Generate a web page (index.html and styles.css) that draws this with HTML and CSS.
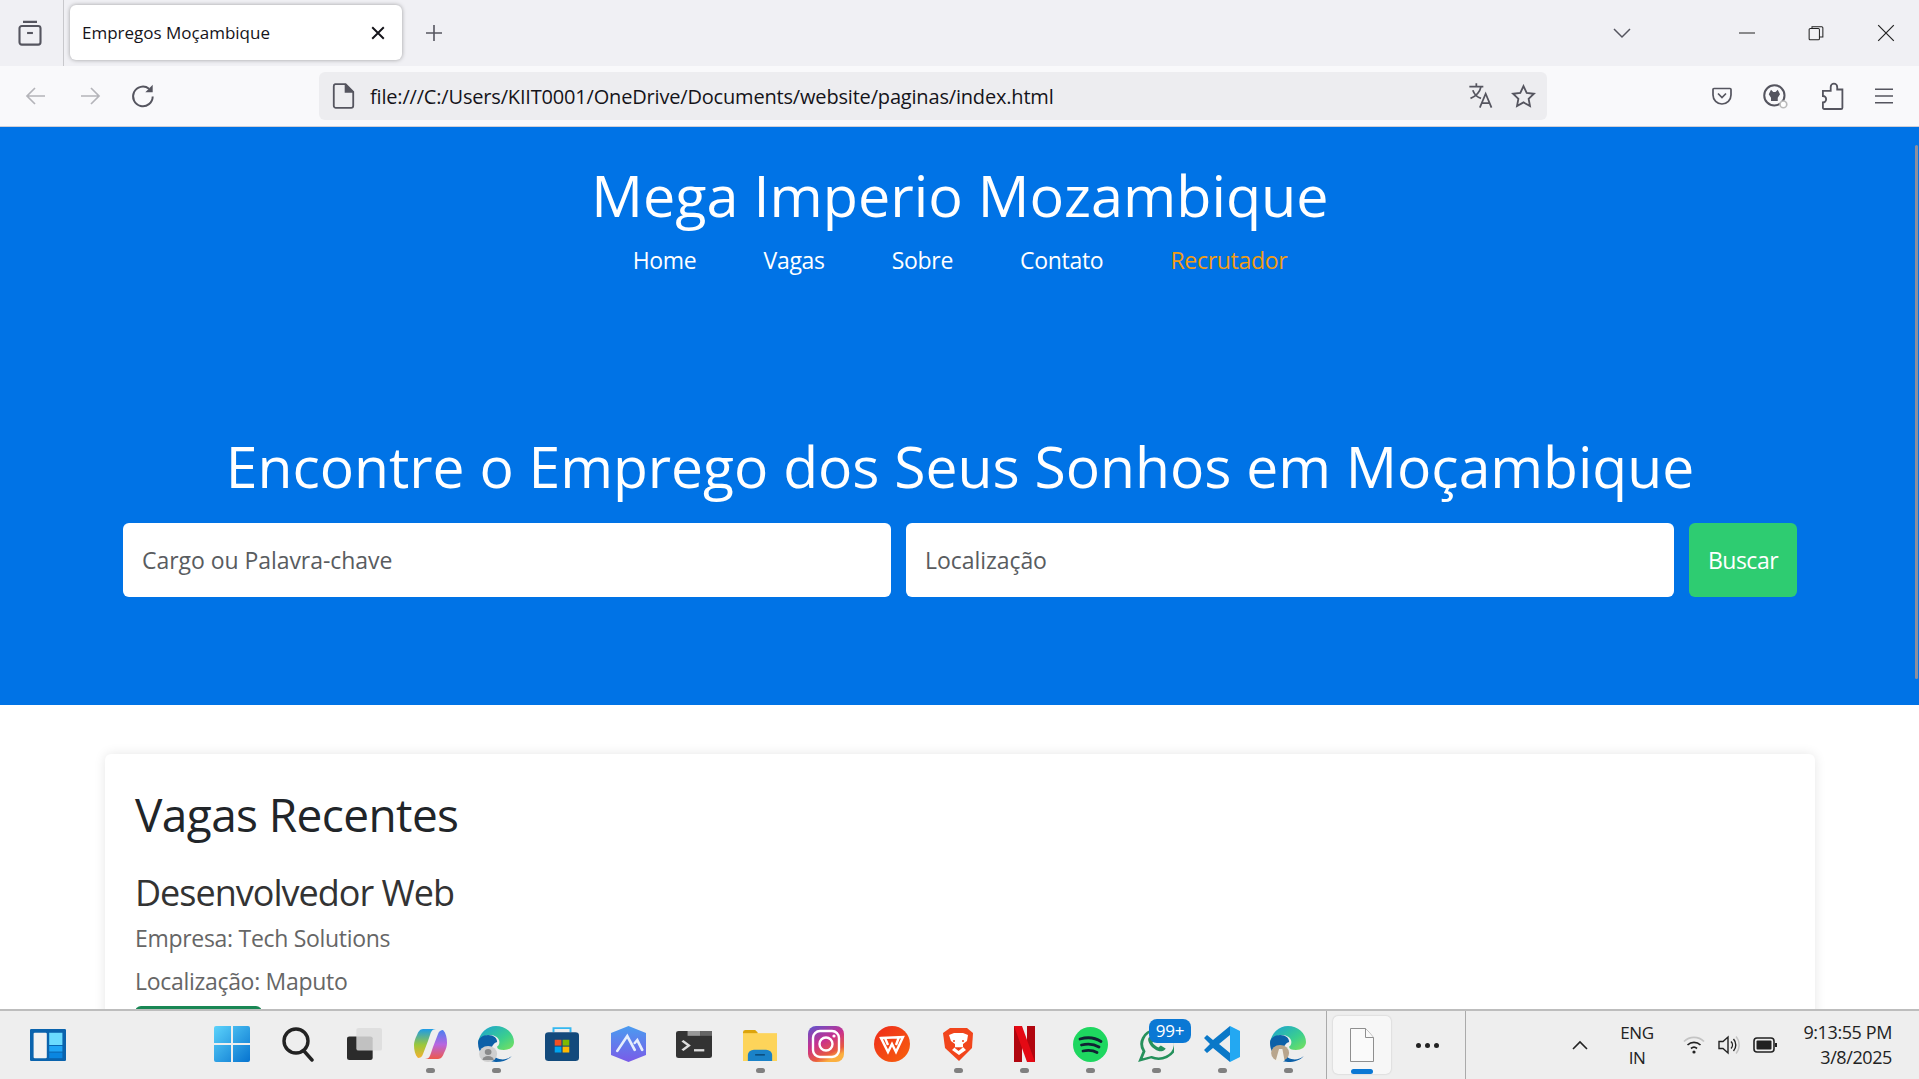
FILE: index.html
```html
<!DOCTYPE html>
<html>
  <head>
    <title>Empregos Moçambique</title>
    <meta name="viewport" content="width=device-width, initial-scale=1.0">
    <link rel="stylesheet" href="styles.css">
  </head>
  <body>
    <div class="tabbar">
      <div class="tab-side">
        <svg width="28" height="28" viewBox="0 0 24 24" fill="none" stroke="#55555f" stroke-width="1.800"><path d="M6 2.5h12M3 8a2 2 0 0 1 2-2h14a2 2 0 0 1 2 2v12a2 2 0 0 1-2 2H5a2 2 0 0 1-2-2z"/><path d="M9.5 12h5"/></svg>
      </div>
      <div class="tab">
        <span class="tab-title">Empregos Moçambique</span>
        <svg width="18" height="18" viewBox="0 0 14 14" stroke="#15141a" stroke-width="1.500"><path d="M2.5 2.5l9 9M11.5 2.5l-9 9"/></svg>
      </div>
      <svg class="new-tab" width="20" height="20" viewBox="0 0 20 20" stroke="#55555f" stroke-width="1.6"><path d="M10 2v16M2 10h16"/></svg>
      <div class="spacer"></div>
      <svg class="tab-list" width="20" height="12" viewBox="0 0 20 12" fill="none" stroke="#55555f" stroke-width="1.5"><path d="M2 2l8 8 8-8"/></svg>
      <div class="win-btns">
        <svg width="16" height="16" viewBox="0 0 16 16" stroke="#222" stroke-width="1"><path d="M0 8h16"/></svg>
        <svg width="16" height="16" viewBox="0 0 14 14" fill="none" stroke="#222" stroke-width=".9"><rect x="1" y="3" width="9" height="10" rx="1"/><path d="M3.5 3V1.500h8.500a1 1 0 0 1 1 1V10.500h-3"/></svg>
        <svg width="18" height="18" viewBox="0 0 15 15" stroke="#222" stroke-width="1"><path d="M1 1l13 13M14 1L1 14"/></svg>
      </div>
    </div>

    <div class="toolbar">
      <div class="nav-btns">
        <svg width="22" height="20" viewBox="0 0 22 20" fill="none" stroke="#b4b4b9" stroke-width="1.7"><path d="M20 10H2M10 2l-8 8 8 8"/></svg>
        <svg width="22" height="20" viewBox="0 0 22 20" fill="none" stroke="#b4b4b9" stroke-width="1.7"><path d="M2 10h18M12 2l8 8-8 8"/></svg>
        <svg class="reload" width="27" height="27" viewBox="0 0 22 22" fill="none" stroke="#55555f" stroke-width="1.600"><path d="M18.500 11a8 8 0 1 1-3-6.300"/><path d="M18.500 1.500v6h-6z" fill="#55555f" stroke="none"/></svg>
      </div>
      <div class="urlbar">
        <svg width="25" height="28" viewBox="0 0 18 20" fill="none" stroke="#55555f" stroke-width="1.300"><path d="M3 1.500h7.500L16 7v10a1.500 1.500 0 0 1-1.500 1.500h-11A1.500 1.500 0 0 1 2 17V3a1.500 1.500 0 0 1 1-1.500z"/><path d="M10.500 1.500V7H16" fill="#55555f"/></svg>
        <span class="url">file:///C:/Users/KIIT0001/OneDrive/Documents/website/paginas/index.html</span>
        <svg width="26" height="28" viewBox="0 0 22 24" fill="none" stroke="#55555f" stroke-width="1.500"><path d="M1 4h12M7 1v3M11 4c-1 5-4 8-9 10M4 7c1 3 4 6 7 7"/><path d="M10 22l5-12 5 12M12 18h6"/></svg>
        <svg class="star" width="25" height="25" viewBox="0 0 22 22" fill="none" stroke="#55555f" stroke-width="1.600"><path d="M11 1.800l2.800 6 6.400.8-4.700 4.400 1.200 6.400-5.700-3.200-5.700 3.200 1.200-6.400L1.800 8.600l6.400-.8z"/></svg>
      </div>
      <div class="tool-btns">
        <svg width="20" height="20" viewBox="0 0 20 20" fill="none" stroke="#55555f" stroke-width="1.7"><path d="M2 2.500h16a1 1 0 0 1 1 1V9a9 9 0 0 1-18 0V3.500a1 1 0 0 1 1-1z"/><path d="M6 7.500l4 4 4-4"/></svg>
        <svg width="27" height="27" viewBox="0 0 24 24" fill="none"><circle cx="11" cy="11" r="9" stroke="#55555f" stroke-width="1.800"/><path d="M6 10l2-4 2 2h2l2-2 2 4-2 3v3H8v-3z" fill="#55555f"/><circle cx="19" cy="19" r="3" fill="#fff" stroke="#bbb" stroke-width="1.500"/></svg>
        <svg width="26" height="32" viewBox="0 0 20 24" fill="none" stroke="#55555f" stroke-width="1.400"><path d="M9 5a2.500 2.500 0 0 1 5 0v2h4v14a1 1 0 0 1-1 1H4a1 1 0 0 1-1-1v-4a2.500 2.500 0 0 0 0-5V8h6z"/></svg>
        <svg width="18" height="18" viewBox="0 0 16 15" stroke="#55555f" stroke-width="1.500"><path d="M0 1.500h16M0 7.500h16M0 13.500h16"/></svg>
      </div>
    </div>

    <div class="viewport">
      <div class="scroll-thumb"></div>
      <header class="site-header">
        <h1>Mega Imperio Mozambique</h1>
        <nav class="site-nav">
          <a href="#">Home</a>
          <a href="#">Vagas</a>
          <a href="#">Sobre</a>
          <a href="#">Contato</a>
          <a class="recruiter" href="#">Recrutador</a>
        </nav>
        <h2 class="hero-title">Encontre o Emprego dos Seus Sonhos em Moçambique</h2>
        <form class="search">
          <input type="text" placeholder="Cargo ou Palavra-chave">
          <input type="text" placeholder="Localização">
          <button type="button">Buscar</button>
        </form>
      </header>
      <section class="jobs">
        <h2>Vagas Recentes</h2>
        <h3>Desenvolvedor Web</h3>
        <p>Empresa: Tech Solutions</p>
        <p>Localização: Maputo</p>
        <a class="apply" href="#"></a>
      </section>
    </div>

    <div class="taskbar">
      <div class="widgets">
        <svg width="36" height="32" viewBox="0 0 30 34" preserveAspectRatio="none"><rect width="30" height="34" rx="1" fill="#0a63ad"/><rect x="3" y="4" width="11" height="27" rx="1" fill="#f2f2f2"/><rect x="16" y="4" width="11" height="13" fill="#6bdcff"/><rect x="16" y="18" width="11" height="6" fill="#1fa5f5"/><rect x="16" y="25" width="11" height="6" fill="#0a86e0"/></svg>
      </div>
      <div class="apps">
        <div class="app"><svg width="36" height="36" viewBox="0 0 36 36"><defs><linearGradient id="winGrad" x1="0" y1="0" x2="1" y2="1"><stop offset="0" stop-color="#5cd3fb"/><stop offset="1" stop-color="#0673cf"/></linearGradient></defs><path d="M2 0h15v17H0V2a2 2 0 0 1 2-2zM19 0h15a2 2 0 0 1 2 2v15H19zM0 19h17v17H2a2 2 0 0 1-2-2zM19 19h17v15a2 2 0 0 1-2 2H19z" fill="url(#winGrad)"/></svg></div>
        <div class="app"><svg width="34" height="36" viewBox="0 0 34 36" fill="none" stroke="#222" stroke-width="3.400"><circle cx="15" cy="15" r="12"/><path d="M23 25l8 9" stroke-linecap="round"/></svg></div>
        <div class="app"><svg width="35" height="32" viewBox="0 0 30 34" preserveAspectRatio="none"><rect x="0" y="9" width="22" height="25" rx="2" fill="#2b2b2b"/><rect x="8" y="0" width="22" height="24" rx="2" fill="#dcdcdc" fill-opacity=".85"/></svg></div>
        <div class="app dot"><svg width="33" height="30" viewBox="0 0 33 30"><defs><linearGradient id="copA" x1="0" y1="0" x2="0" y2="1"><stop offset="0" stop-color="#1d9be8"/><stop offset=".55" stop-color="#9bc83a"/><stop offset="1" stop-color="#f4b030"/></linearGradient><linearGradient id="copB" x1="0" y1="0" x2="0" y2="1"><stop offset="0" stop-color="#4a7ff0"/><stop offset=".5" stop-color="#b866e0"/><stop offset="1" stop-color="#ee5a4a"/></linearGradient></defs><path d="M9 0h13c-4 0-5 3-6 6l-2 6-5 13c-1 3-3 4-5 4-3-3-4-8-4-13 0-3 1-6 3-10 1-3 3-6 6-6z" fill="url(#copA)"/><path d="M24 30H11c4 0 5-3 6-6l2-6 5-13c1-3 3-4 5-4 3 3 4 8 4 13 0 3-1 6-3 10-1 3-3 6-6 6z" fill="url(#copB)"/></svg></div>
        <div class="app dot"><svg width="36" height="36" viewBox="0 0 32 36" preserveAspectRatio="none"><defs><linearGradient id="edgeGrad" x1="0" y1="0" x2="1" y2="1"><stop offset="0" stop-color="#1a9fd8"/><stop offset=".6" stop-color="#3bcf8e"/><stop offset="1" stop-color="#7ce25a"/></linearGradient></defs><path d="M16 0a16 16 0 0 1 16 16c0 5-4 8-9 8-4 0-6-1-6-3 0-1 2-1 2-5 0-4-4-7-8-7-5 0-9 3-11 8C1 7 8 0 16 0z" fill="url(#edgeGrad)"/><path d="M0 17c0-5 4-8 9-8 5 0 8 3 8 7-3 1-5 4-5 8 0 4 3 8 7 9 4 1 8 0 11-3-3 4-8 6-14 6C7 36 0 27 0 17z" fill="#0c60a8"/><circle cx="9" cy="28" r="8" fill="#cfcfcf"/><circle cx="9" cy="26" r="3" fill="#8a8a8a"/><path d="M4 34a5 4 0 0 1 10 0z" fill="#8a8a8a"/></svg></div>
        <div class="app"><svg width="34" height="34" viewBox="0 0 28 32" preserveAspectRatio="none"><path d="M7 5V1h14v4" fill="none" stroke="#35b8f0" stroke-width="1.600"/><rect y="5" width="28" height="27" rx="3" fill="#134a7c"/><rect x="8" y="12" width="5.500" height="5.500" fill="#f25022"/><rect x="14.500" y="12" width="5.500" height="5.500" fill="#7fba00"/><rect x="8" y="18.500" width="5.500" height="5.500" fill="#00a4ef"/><rect x="14.500" y="18.500" width="5.500" height="5.500" fill="#ffb900"/></svg></div>
        <div class="app"><svg width="35" height="36" viewBox="0 0 28 36" preserveAspectRatio="none"><defs><linearGradient id="arcGrad" x1="0" y1="0" x2="0" y2="1"><stop offset="0" stop-color="#4a9cf0"/><stop offset="1" stop-color="#7a5be8"/></linearGradient></defs><path d="M14 0l14 7v22l-14 7-14-7V7z" fill="url(#arcGrad)"/><path d="M5 25L13 10l6 14M19 17l2-3 4 10" fill="none" stroke="#e6eefc" stroke-width="2.200" stroke-linecap="round"/></svg></div>
        <div class="app"><svg width="36" height="27" viewBox="0 0 28 28" preserveAspectRatio="none"><rect width="28" height="28" rx="2" fill="#333"/><rect width="10" height="5" x="9" fill="#999"/><rect width="9" height="5" x="19" fill="#666"/><path d="M5 10l5 5-5 5" fill="none" stroke="#ddd" stroke-width="2.200"/><path d="M14 20h8" stroke="#ddd" stroke-width="2.400"/></svg></div>
        <div class="app dot"><svg width="34" height="33" viewBox="0 0 28 32" preserveAspectRatio="none"><path d="M0 4a2 2 0 0 1 2-2h8l2 2v4H0z" fill="#dca40c"/><rect y="5" width="28" height="27" fill="#fdd45a"/><path d="M4 32v-6a5 5 0 0 1 5-5h10a5 5 0 0 1 5 5v6z" fill="#1a82c8"/><path d="M10 26h8" stroke="#0c4f80" stroke-width="1.600"/></svg></div>
        <div class="app"><svg width="36" height="36" viewBox="0 0 36 36"><defs><linearGradient id="instaGrad" x1="0" y1="0" x2=".5" y2="1"><stop offset="0" stop-color="#5b55d0"/><stop offset=".5" stop-color="#c8308e"/><stop offset=".85" stop-color="#e85a40"/><stop offset="1" stop-color="#fbb040"/></linearGradient></defs><rect width="36" height="36" rx="8" fill="url(#instaGrad)"/><rect x="5" y="5" width="26" height="26" rx="7" fill="none" stroke="#fff" stroke-width="2.400"/><circle cx="18" cy="18" r="6.500" fill="none" stroke="#fff" stroke-width="2.400"/><circle cx="26" cy="10" r="1.600" fill="#fff"/></svg></div>
        <div class="app"><svg width="36" height="36" viewBox="0 0 36 36"><defs><linearGradient id="wpsGrad" x1="0" y1="0" x2="1" y2="1"><stop offset="0" stop-color="#ee2a1c"/><stop offset="1" stop-color="#f8620c"/></linearGradient></defs><circle cx="18" cy="18" r="18" fill="url(#wpsGrad)"/><path d="M7 12l22-1-7 15-4-8-4 8zM11 12l3 7M25 11l-3 8" fill="none" stroke="#fff" stroke-width="2.400"/></svg></div>
        <div class="app dot"><svg width="31" height="33" viewBox="0 0 31 33"><path d="M7 0h17l6 5-1 15-13 13L2 20 0 5z" fill="#f1451c"/><path d="M6 7l5-2h9l5 2-1 6-4 3v3l3 3-7 5-7-5 3-3v-3l-4-3z" fill="#fff"/><path d="M12 13h-2M21 13h-2M13 20h5l-2.500 2z" stroke="#f1451c" stroke-width="1.500"/></svg></div>
        <div class="app dot"><svg width="21" height="36" viewBox="0 0 21 36"><path d="M0 0h8v36H0z" fill="#b1060f"/><path d="M13 0h8v36h-8z" fill="#b1060f"/><path d="M0 0h8l13 36h-8z" fill="#e50914"/></svg></div>
        <div class="app dot"><svg width="35" height="35" viewBox="0 0 35 35"><circle cx="17.500" cy="17.500" r="17.500" fill="#1ed760"/><path d="M7 12c7-2 15-1.500 21 2.500M8.500 18c6-1.500 12.500-1 17.500 2M10 24c5-1 10-.8 14 1.500" fill="none" stroke="#123" stroke-width="2.800" stroke-linecap="round"/></svg></div>
        <div class="app dot whatsapp">
          <svg width="36" height="35" viewBox="0 0 30 36" preserveAspectRatio="none"><path d="M2 34l3-9A14 15 0 1 1 11 31z" fill="none" stroke="#25915c" stroke-width="2.400"/><path d="M10 10c-2 1-2 4 0 8 2 4 6 7 9 7 2 0 4-2 4-3l-4-3-2 2c-2-1-4-3-5-5l2-2-2-4z" fill="#25915c"/></svg>
          <span class="badge">99+</span>
        </div>
        <div class="app dot"><svg width="36" height="36" viewBox="0 0 36 36"><path d="M26 0l10 5v26l-10 5V27V9z" fill="#23a8f2"/><path d="M26 0v9L15 18l11 9v9L9 22l-6 5-3-3 6-6-6-6 3-3 6 5z" fill="#0a78c8"/></svg></div>
        <div class="app dot"><svg width="36" height="36" viewBox="0 0 32 36" preserveAspectRatio="none"><path d="M16 0a16 16 0 0 1 16 16c0 5-4 8-9 8-4 0-6-1-6-3 0-1 2-1 2-5 0-4-4-7-8-7-5 0-9 3-11 8C1 7 8 0 16 0z" fill="url(#edgeGrad)"/><path d="M0 17c0-5 4-8 9-8 5 0 8 3 8 7-3 1-5 4-5 8 0 4 3 8 7 9 4 1 8 0 11-3-3 4-8 6-14 6C7 36 0 27 0 17z" fill="#0c60a8"/><circle cx="9" cy="27" r="8" fill="#b8a58c"/><path d="M5 35l3-12h3l2 12z" fill="#f0eee8"/></svg></div>
      </div>
      <div class="open-app">
        <div class="notepad">
          <svg width="24" height="34" viewBox="0 0 24 34" fill="#fafafa" stroke="#8f8f8f" stroke-width="1"><path d="M.5.500h15l8 9v24H.5z"/><path d="M15.500.500v9h8"/></svg>
          <span class="running"></span>
        </div>
        <div class="more"><i></i><i></i><i></i></div>
      </div>
      <div class="tray">
        <svg width="16" height="10" viewBox="0 0 16 10" fill="none" stroke="#222" stroke-width="1.600"><path d="M1 9l7-7 7 7"/></svg>
        <div class="lang">ENG<br>IN</div>
        <div class="tray-icons">
          <svg width="22" height="20" viewBox="0 0 22 20" fill="none" stroke="#222" stroke-width="1.700"><path d="M1 6.500a14 14 0 0 1 20 0" stroke="#c4c4c4"/><path d="M4.500 10a9.500 9.500 0 0 1 13 0M8 13.500a4.500 4.500 0 0 1 6 0"/><circle cx="11" cy="17" r="1.600" fill="#222" stroke="none"/></svg>
          <svg width="22" height="20" viewBox="0 0 22 20" fill="none" stroke="#222" stroke-width="1.400"><path d="M1 6.500h4l5-4.500v16l-5-4.500H1z"/><path d="M13 6.500a5 5 0 0 1 0 7M15.500 4a9 9 0 0 1 0 12"/><path d="M18 1.500a13 13 0 0 1 0 17" stroke="#c4c4c4"/></svg>
          <svg width="24" height="16" viewBox="0 0 24 16"><rect x="1" y="1" width="20" height="14" rx="3" fill="none" stroke="#222" stroke-width="1.600"/><rect x="3.500" y="3.500" width="15" height="9" rx="1" fill="#222"/><rect x="22" y="6" width="2" height="4" fill="#222"/></svg>
        </div>
        <div class="clock">9:13:55 PM<br>3/8/2025</div>
      </div>
    </div>
  </body>
</html>
```

FILE: styles.css
```css
* {
  box-sizing: border-box;
}
html, body {
  height: 100%;
}
body {
  margin: 0;
  font-family: 'Open Sans', sans-serif;
  display: flex;
  flex-direction: column;
  overflow: hidden;
  background-color: #fff;
}
.tabbar {
  height: 66px;
  background-color: #f0f0f4;
  display: flex;
  align-items: center;
  flex: none;
}
.tab-side {
  width: 64px;
  height: 66px;
  border-right: 1px solid #c8c8cc;
  display: flex;
  align-items: center;
  justify-content: center;
  padding-right: 4px;
}
.tab {
  width: 332px;
  height: 55px;
  margin-left: 6px;
  margin-top: -1px;
  background-color: #fff;
  border-radius: 6px;
  box-shadow: 0 0 4px rgba(0, 0, 0, 0.35);
  display: flex;
  align-items: center;
  justify-content: space-between;
  padding: 0 15px 0 12px;
}
.tab-title {
  font-size: 17px;
  color: #15141a;
}
.new-tab {
  margin-left: 22px;
}
.spacer {
  flex: 1;
}
.tab-list {
  margin-right: 107px;
}
.win-btns {
  display: flex;
  align-items: center;
  gap: 53px;
  padding-right: 24px;
}
.toolbar {
  height: 61px;
  background-color: #f9f9fb;
  border-bottom: 1px solid #cfcfd8;
  display: flex;
  align-items: center;
  flex: none;
}
.nav-btns {
  width: 319px;
  display: flex;
  align-items: center;
  gap: 32px;
  padding-left: 25px;
}
.reload {
  margin-left: -3px;
}
.urlbar {
  width: 1228px;
  height: 48px;
  background-color: #ededf0;
  border-radius: 6px;
  display: flex;
  align-items: center;
  padding: 0 11px 0 12px;
  gap: 14px;
}
.url {
  flex: 1;
  font-size: 20px;
  letter-spacing: -0.18px;
  color: #15141a;
  white-space: nowrap;
}
.star {
  margin-left: 3px;
}
.tool-btns {
  flex: 1;
  display: flex;
  align-items: center;
  justify-content: flex-end;
  gap: 30px;
  padding-right: 26px;
}
.viewport {
  flex: 1;
  min-height: 0;
  overflow: hidden;
  position: relative;
}
.scroll-thumb {
  position: absolute;
  right: 1px;
  top: 18px;
  width: 3px;
  height: 534px;
  background-color: #8f8f9d;
  border-radius: 2px;
}
.site-header {
  height: 578px;
  background-color: #0073e6;
  color: #fff;
  text-align: center;
  padding: 29px 122px 0 123px;
}
.site-header h1 {
  margin: 0;
  font-size: 57.5px;
  line-height: 78px;
  font-weight: 400;
}
.site-nav {
  display: flex;
  justify-content: center;
  gap: 67px;
  margin-top: 10px;
  font-size: 23px;
  line-height: 32px;
}
.site-nav a {
  color: #fff;
  text-decoration: none;
  letter-spacing: -0.3px;
}
.site-nav a.recruiter {
  color: #f39c12;
}
.hero-title {
  margin: 151px 0 0;
  font-size: 57px;
  line-height: 78px;
  font-weight: 400;
}
.search {
  display: flex;
  gap: 15px;
  margin-top: 18px;
}
.search input {
  flex: 1;
  min-width: 0;
  height: 74px;
  border: 0;
  border-radius: 6px;
  background-color: #fff;
  padding: 0 19px;
  font-family: inherit;
  font-size: 23px;
  letter-spacing: -0.05px;
}
.search input::placeholder {
  color: #595c5f;
  opacity: 1;
}
.search button {
  width: 108px;
  height: 74px;
  border: 0;
  border-radius: 6px;
  background-color: #2ecc71;
  color: #fff;
  font-family: inherit;
  font-size: 23px;
  letter-spacing: -0.5px;
}
.jobs {
  margin: 49px 104px 0 105px;
  padding: 29px 30px 0;
  border-radius: 6px;
  background-color: #fff;
  box-shadow: 0 0 12px rgba(0, 0, 0, 0.1);
  height: 400px;
}
.jobs h2 {
  margin: 0;
  font-size: 46px;
  line-height: 62px;
  font-weight: 400;
  letter-spacing: -0.6px;
  color: #212529;
}
.jobs h3 {
  margin: 23px 0 0;
  font-size: 36px;
  line-height: 50px;
  font-weight: 400;
  letter-spacing: -1px;
  color: #333;
}
.jobs p {
  margin: 3px 0 9px;
  font-size: 23px;
  line-height: 34px;
  letter-spacing: -0.3px;
  color: #666;
}
.apply {
  display: block;
  margin-top: -1px;
  width: 127px;
  height: 50px;
  border-radius: 6px;
  background-color: #198754;
}
.taskbar {
  height: 70px;
  flex: none;
  position: relative;
  background-color: #eeeeee;
  border-top: 2px solid #bdbdbd;
  display: flex;
  align-items: center;
}
.widgets {
  width: 199px;
  padding-left: 30px;
  display: flex;
}
.apps {
  display: flex;
  align-items: center;
  margin-top: -2px;
}
.app {
  width: 66px;
  height: 56px;
  display: flex;
  align-items: center;
  justify-content: center;
  position: relative;
}
.app.dot::after {
  content: "";
  position: absolute;
  left: 29px;
  bottom: -1px;
  width: 9px;
  height: 5px;
  border-radius: 3px;
  background-color: #808080;
}
.badge {
  position: absolute;
  left: 26px;
  top: 3px;
  width: 42px;
  height: 24px;
  border-radius: 8px;
  background-color: #0a78d4;
  color: #fff;
  font-size: 17px;
  line-height: 24px;
  text-align: center;
  letter-spacing: -0.3px;
}
.open-app {
  margin-left: 5px;
  width: 140px;
  height: 68px;
  border-left: 1px solid #aaa;
  border-right: 1px solid #aaa;
  display: flex;
  align-items: center;
  padding-left: 6px;
}
.notepad {
  width: 58px;
  height: 58px;
  background-color: #f7f7f7;
  border-radius: 5px;
  box-shadow: 0 0 2px rgba(0, 0, 0, 0.2);
  display: flex;
  flex-direction: column;
  align-items: center;
  justify-content: flex-end;
  gap: 7px;
}
.running {
  width: 22px;
  height: 5px;
  border-radius: 3px;
  background-color: #0a78d4;
}
.more {
  display: flex;
  gap: 4px;
  margin-left: 25px;
}
.more i {
  width: 5px;
  height: 5px;
  border-radius: 50%;
  background-color: #222;
}
.tray {
  flex: 1;
  display: flex;
  align-items: center;
  padding: 0 27px 0 106px;
  color: #222;
}
.lang {
  margin-left: 24px;
  width: 50px;
  font-size: 17px;
  line-height: 25px;
  letter-spacing: -0.4px;
  text-align: center;
}
.tray-icons {
  margin-left: 21px;
  display: flex;
  align-items: center;
  gap: 13px;
}
.clock {
  margin-left: auto;
  font-size: 18px;
  line-height: 25px;
  letter-spacing: -0.4px;
  text-align: right;
}
```
